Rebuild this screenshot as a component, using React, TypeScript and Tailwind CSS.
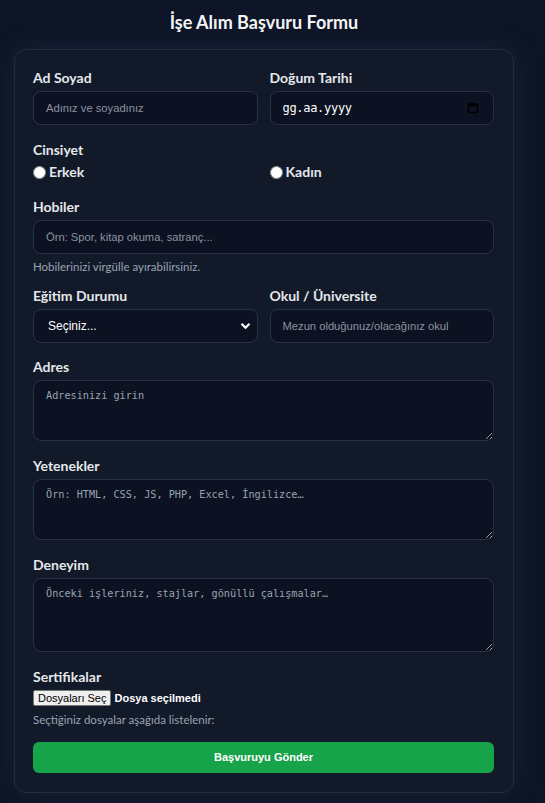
import { useState } from 'react';

const labelCls = "block text-[14px] leading-5 font-bold text-[#e5e7eb] mb-[3px]";
const inputCls =
  "w-full h-[34px] rounded-lg border border-[#283246] bg-[#0c1222] px-3 text-[12px] text-white placeholder:text-[#8b93a1] placeholder:text-[11.2px] outline-none font-['Liberation_Sans',Arial,sans-serif]";
const areaCls =
  "block w-full rounded-lg border border-[#283246] bg-[#0c1222] px-3 py-[8px] text-[10.2px] leading-[14px] text-white placeholder:text-[#9aa3b1] outline-none font-['DejaVu_Sans_Mono',monospace]";
const helpCls = "mt-[5px] text-[11.5px] leading-4 text-[#9aa3b2]";

const Field = ({ label, children, className = "" }: { label: string; children: React.ReactNode; className?: string }) => (
  <div className={className}>
    <label className={labelCls}>{label}</label>
    {children}
  </div>
);

export default function App() {
  const [gender, setGender] = useState('');

  return (
    <div className="min-h-screen bg-[#0e1527] font-['Lato','Noto_Sans',sans-serif] pb-[10px]">
      <div className="w-[500px] ml-[14px]">
        <h1 className="pt-[11px] pb-[16px] text-center text-[18px] leading-[22px] font-bold text-[#f3f4f6]">
          İşe Alım Başvuru Formu
        </h1>

        <form
          className="rounded-xl border border-[#232c3d] bg-[#121a2a] pl-[18px] pr-[19px] pt-[18px] pb-[19px] shadow-[0_0_24px_rgba(30,41,64,0.6)] flex flex-col gap-[15px]"
          onSubmit={(e) => e.preventDefault()}
        >
          <div className="grid grid-cols-2 gap-3">
            <Field label="Ad Soyad">
              <input className={inputCls} placeholder="Adınız ve soyadınız" />
            </Field>
            <Field label="Doğum Tarihi">
              <div className={`${inputCls} flex items-center justify-between`}>
                <span className="font-['DejaVu_Sans_Mono',monospace] text-[12px] text-white tracking-[-0.3px]">
                  gg.aa.yyyy
                </span>
                <svg width="12" height="12" viewBox="0 0 12 12" className="mr-[2px]">
                  <rect x="1.5" y="2" width="9" height="8.5" rx="1" fill="none" stroke="#000" strokeWidth="1.4" />
                  <rect x="1.5" y="2" width="9" height="2.2" fill="#000" />
                </svg>
              </div>
            </Field>
          </div>

          <div>
            <label className={labelCls}>Cinsiyet</label>
            <div className="grid grid-cols-2 gap-3 -mt-[1px]">
              {['Erkek', 'Kadın'].map((g) => (
                <label key={g} className="flex items-center gap-[3px] text-[14px] leading-5 font-bold text-[#e5e7eb]">
                  <input
                    type="radio"
                    name="gender"
                    checked={gender === g}
                    onChange={() => setGender(g)}
                    className="m-0 w-[13px] h-[13px]"
                  />
                  {g}
                </label>
              ))}
            </div>
          </div>

          <div>
            <Field label="Hobiler">
              <input className={inputCls} placeholder="Örn: Spor, kitap okuma, satranç..." />
            </Field>
            <p className={helpCls}>Hobilerinizi virgülle ayırabilirsiniz.</p>
          </div>

          <div className="grid grid-cols-2 gap-3 -mt-[4px]">
            <Field label="Eğitim Durumu">
              <div className="relative">
                <select className={`${inputCls} appearance-none pl-[14px]`} defaultValue="">
                  <option value="">Seçiniz...</option>
                  <option>Lise</option>
                  <option>Ön Lisans</option>
                  <option>Lisans</option>
                  <option>Yüksek Lisans</option>
                </select>
                <svg
                  width="11"
                  height="8"
                  viewBox="0 0 11 8"
                  className="absolute right-[7px] top-[13px] pointer-events-none"
                >
                  <path d="M1.5 1.8 5.5 5.8 9.5 1.8" fill="none" stroke="#fff" strokeWidth="2.2" />
                </svg>
              </div>
            </Field>
            <Field label="Okul / Üniversite">
              <input className={inputCls} placeholder="Mezun olduğunuz/olacağınız okul" />
            </Field>
          </div>

          <Field label="Adres" className="-mt-[1px]">
            <textarea className={`${areaCls} h-[61px]`} placeholder="Adresinizi girin" />
          </Field>

          <Field label="Yetenekler">
            <textarea className={`${areaCls} h-[61px]`} placeholder="Örn: HTML, CSS, JS, PHP, Excel, İngilizce…" />
          </Field>

          <Field label="Deneyim">
            <textarea className={`${areaCls} h-[74px]`} placeholder="Önceki işleriniz, stajlar, gönüllü çalışmalar…" />
          </Field>

          <div>
            <label className={labelCls}>Sertifikalar</label>
            <div className="flex items-center gap-[3px] mt-[2px] font-['Liberation_Sans',Arial,sans-serif]">
              <button
                type="button"
                className="h-[16px] px-[4px] rounded-[2px] border border-[#767676] bg-[#efefef] text-[11px] leading-[14px] text-black"
              >
                Dosyaları Seç
              </button>
              <span className="text-[11px] font-bold text-white">Dosya seçilmedi</span>
            </div>
            <p className={helpCls}>Seçtiğiniz dosyalar aşağıda listelenir:</p>
          </div>

          <button
            type="submit"
            className="-mt-[1px] h-[31px] w-full rounded-md bg-[#17a34a] text-[11px] font-bold text-white font-['Liberation_Sans',Arial,sans-serif]"
          >
            Başvuruyu Gönder
          </button>
        </form>
      </div>
    </div>
  );
}
